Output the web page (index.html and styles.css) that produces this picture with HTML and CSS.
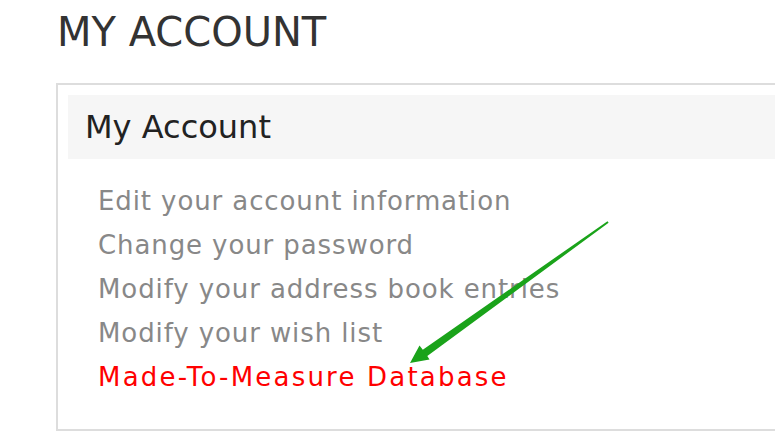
FILE: index.html
```html
<!doctype html>
<html>
<head>
<meta charset="utf-8">
<title>My Account</title>
<link rel="stylesheet" href="styles.css">
</head>
<body>
<div class="page">
	<h1 class="title">MY ACCOUNT</h1>
	<div class="box">
		<h2 class="box-head">My Account</h2>
		<ul class="links">
			<li><a href="javascript:;">Edit your account information</a></li>
			<li><a href="javascript:;">Change your password</a></li>
			<li><a href="javascript:;">Modify your address book entries</a></li>
			<li><a href="javascript:;">Modify your wish list</a></li>
			<li><a href="javascript:;" class="hot">Made-To-Measure Database</a></li>
		</ul>
	</div>
	<svg class="arrow" width="220" height="160" viewBox="0 0 220 160">
		<polygon points="10,148 19.5,130.5 22.8,134.8 207.5,6.2 208.6,7.8 27.3,141 29.5,144.5" fill="#1aa31a"/>
	</svg>
</div>
</body>
</html>
```

FILE: styles.css
```css
*{ margin:0; padding:0; list-style:none;}
body{ background:#fff; font-family:"DejaVu Sans","Open Sans",sans-serif;}
.page{ position:relative; width:775px; height:432px; overflow:hidden;}

.title{ font-size:40px; font-weight:400; color:#333; line-height:1; padding:12px 0 0 57px; height:71px;}

.box{ margin-left:56px; width:760px; height:348px; border:2px solid #ddd; padding:10px; box-sizing:border-box;}
.box-head{ background:#f6f6f6; height:64px; line-height:64px; padding-left:17px; font-size:32px; font-weight:400; color:#222;}

.links{ padding:20px 0 0 30px;}
.links li{ height:44px; line-height:44px; font-size:26px; letter-spacing:0.9px;}
.links a{ color:#888; text-decoration:none;}
.links a.hot{ color:#f00; letter-spacing:2.2px;}

.arrow{ position:absolute; left:400px; top:215px;}
```
